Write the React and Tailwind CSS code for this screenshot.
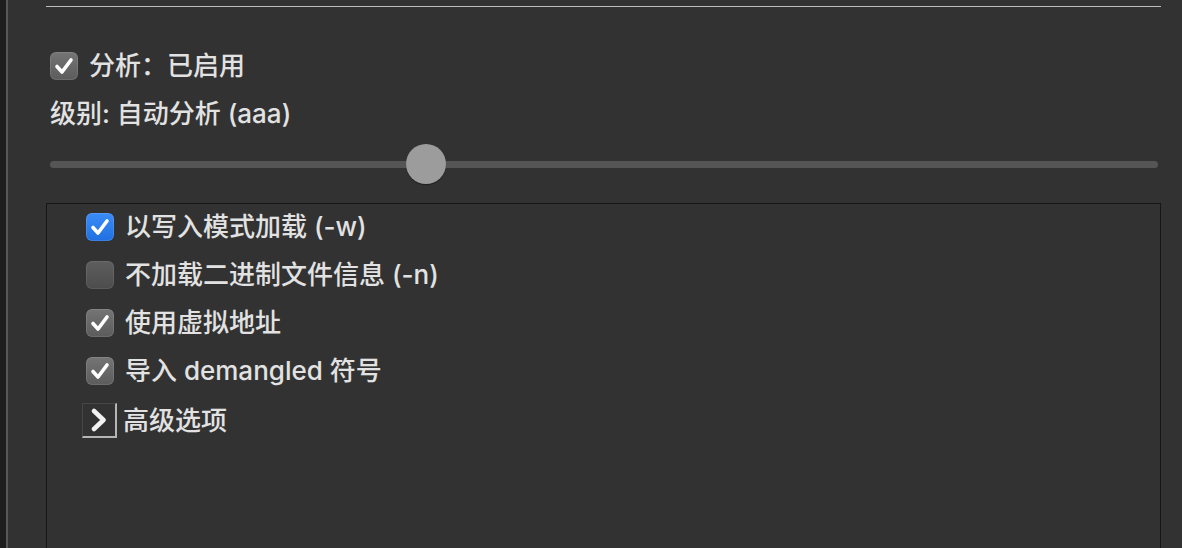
import React from 'react';

const font = { fontFamily: '"Inter", "Noto Sans CJK SC", sans-serif' };

// white tick used by every checkbox
const Tick = () => (
  <svg viewBox="0 0 28 28" className="w-full h-full">
    <polyline points="7,14.5 12,20 21,8" fill="none" stroke="white" strokeWidth="3.6" strokeLinecap="round" strokeLinejoin="round" />
  </svg>
);

const Box = ({ state }) => {
  if (state === 'blue') {
    return (
      <div className="w-[28px] h-[28px] rounded-[6px] bg-gradient-to-b from-[#3b8cf7] to-[#1f6fe0] shadow-[inset_0_0_0_1px_rgba(255,255,255,0.12)] shrink-0">
        <Tick />
      </div>
    );
  }
  if (state === 'on') {
    return (
      <div className="w-[28px] h-[28px] rounded-[6px] bg-gradient-to-b from-[#757575] to-[#5c5c5c] shadow-[inset_0_0_0_1px_rgba(255,255,255,0.1)] shrink-0">
        <Tick />
      </div>
    );
  }
  return <div className="w-[28px] h-[28px] rounded-[6px] bg-gradient-to-b from-[#5e5e5e] to-[#4c4c4c] shadow-[inset_0_0_0_1px_rgba(255,255,255,0.08)] shrink-0" />;
};

const options = [
  { label: '以写入模式加载 (-w)', state: 'blue' },
  { label: '不加载二进制文件信息 (-n)', state: 'off' },
  { label: '使用虚拟地址', state: 'on' },
  { label: '导入 demangled 符号', state: 'on' },
];

export default function App() {
  return (
    <div className="w-[1182px] h-[548px] bg-[#323232] flex overflow-hidden text-[#e2e2e2] font-medium" style={font}>
      {/* sidebar edge */}
      <div className="w-[6px] bg-[#1e1e1e] shrink-0" />
      <div className="w-[2px] bg-[#575757] shrink-0" />

      <div className="ml-[38px] w-[1115px] flex flex-col">
        <div className="mt-[6px] h-px bg-[#bdbdbd]" />

        <div className="mt-[45px] ml-[4px] flex items-center gap-[11px] h-[28px]">
          <Box state="on" />
          <span className="text-[26px] leading-none">分析：已启用</span>
        </div>

        <div className="mt-[18px] ml-[4px] text-[26px] leading-[32px]">级别: 自动分析 (aaa)</div>

        {/* slider */}
        <div className="mt-[14px] ml-[4px] w-[1108px] h-[40px] flex items-center relative">
          <div className="w-full h-[7px] rounded-full bg-[#555555]" />
          <div className="absolute left-[356px] top-0 w-[40px] h-[40px] rounded-full bg-[#9c9c9c] shadow-[0_1px_1px_rgba(0,0,0,0.4)]" />
        </div>

        {/* options box */}
        <div className="mt-[19px] flex-1 border-t border-l border-r border-[#161616] pl-[39px] pt-[9px] flex flex-col">
          {options.map((o) => (
            <div key={o.label} className="flex items-center gap-[11px] h-[28px] mb-[20px]">
              <Box state={o.state} />
              <span className="text-[26px] leading-none whitespace-nowrap">{o.label}</span>
            </div>
          ))}
          <div className="flex items-center gap-[6px] -ml-[4px] -mt-[2px]">
            <div className="w-[35px] h-[35px] border-t border-l border-[#474747] border-b-2 border-r-2 border-b-[#b5b5b5] border-r-[#b5b5b5] flex items-center justify-center">
              <svg viewBox="0 0 20 24" className="w-[20px] h-[24px]">
                <polyline points="5,3 14.5,12 5,21" fill="none" stroke="#f2f2f2" strokeWidth="4.5" strokeLinecap="round" strokeLinejoin="round" />
              </svg>
            </div>
            <span className="text-[26px] leading-none">高级选项</span>
          </div>
        </div>
      </div>
    </div>
  );
}
